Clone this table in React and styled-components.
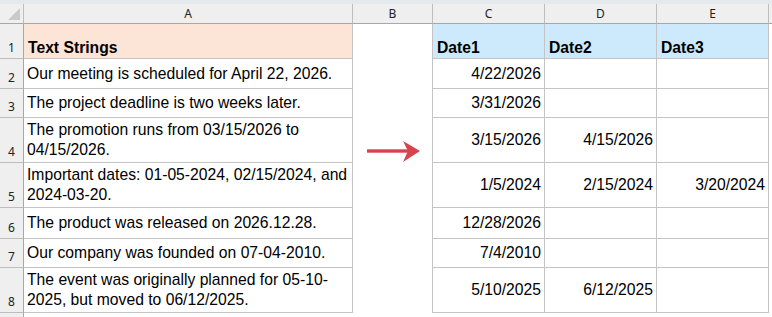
import React from "react";
import styled, { createGlobalStyle } from "styled-components";

const GlobalStyle = createGlobalStyle`
  html, body {
    margin: 0;
    padding: 0;
    background: #ffffff;
  }
`;

const Page = styled.div`
  width: 772px;
  height: 317px;
  overflow: hidden;
  background: #ffffff;
  font-family: "Liberation Sans", Arial, sans-serif;
`;

const TopStrip = styled.div`
  height: 4px;
  background: #e4e9ee;
`;

const Sheet = styled.div`
  position: relative;
  display: grid;
  grid-template-columns: 24px 329px 80px 112px 112px 112px 1fr;
  grid-template-rows: 20px 35px 30px 29px 45px 45px 31px 29px 45px 20px;
`;

const ColHead = styled.div`
  box-sizing: border-box;
  background: #efefef;
  border-right: 1px solid #bdbdbd;
  border-bottom: 1px solid #a8a8a8;
  display: flex;
  align-items: center;
  justify-content: center;
  font-family: "Noto Sans", "Open Sans", sans-serif;
  font-size: 12px;
  color: #222;
`;

const Corner = styled(ColHead)`
  position: relative;
  &::after {
    content: "";
    position: absolute;
    right: 3px;
    bottom: 3px;
    width: 0;
    height: 0;
    border-left: 12px solid transparent;
    border-bottom: 12px solid #c9c9c9;
  }
`;

const RowHead = styled.div`
  box-sizing: border-box;
  background: #efefef;
  border-right: 1px solid #a8a8a8;
  border-bottom: 1px solid #bdbdbd;
  display: flex;
  align-items: flex-end;
  justify-content: center;
  padding-bottom: 2px;
  font-family: "Noto Sans", "Open Sans", sans-serif;
  font-size: 12px;
  color: #222;
`;

const Cell = styled.div`
  box-sizing: border-box;
  background: ${(p) => p.$bg || "#ffffff"};
  border-right: ${(p) => (p.$noRight ? "none" : "1px solid #c4c4c4")};
  border-bottom: ${(p) => (p.$noBottom ? "none" : "1px solid #c4c4c4")};
  display: flex;
  flex-direction: column;
  justify-content: ${(p) => (p.$head ? "flex-end" : "center")};
  align-items: ${(p) => (p.$right ? "flex-end" : "flex-start")};
  padding: 0 3px 0 ${(p) => (p.$head ? "4px" : "3px")};
  font-size: 15.7px;
  line-height: 20px;
  font-weight: ${(p) => (p.$head ? 700 : 400)};
  color: #000;
  white-space: nowrap;
`;

const Arrow = styled.svg`
  position: absolute;
  left: 360px;
  top: 126px;
`;

const rows = [
  {
    n: 2,
    text: ["Our meeting is scheduled for April 22, 2026."],
    dates: ["4/22/2026", "", ""],
  },
  {
    n: 3,
    text: ["The project deadline is two weeks later."],
    dates: ["3/31/2026", "", ""],
  },
  {
    n: 4,
    text: ["The promotion runs from 03/15/2026 to", "04/15/2026."],
    dates: ["3/15/2026", "4/15/2026", ""],
  },
  {
    n: 5,
    text: ["Important dates: 01-05-2024, 02/15/2024, and", "2024-03-20."],
    dates: ["1/5/2024", "2/15/2024", "3/20/2024"],
  },
  {
    n: 6,
    text: ["The product was released on 2026.12.28."],
    dates: ["12/28/2026", "", ""],
  },
  {
    n: 7,
    text: ["Our company was founded on 07-04-2010."],
    dates: ["7/4/2010", "", ""],
  },
  {
    n: 8,
    text: ["The event was originally planned for 05-10-", "2025, but moved to 06/12/2025."],
    dates: ["5/10/2025", "6/12/2025", ""],
  },
];

const App = () => {
  return (
    <Page>
      <GlobalStyle />
      <TopStrip />
      <Sheet>
        <Corner />
        <ColHead>A</ColHead>
        <ColHead>B</ColHead>
        <ColHead>C</ColHead>
        <ColHead>D</ColHead>
        <ColHead>E</ColHead>
        <ColHead />

        <RowHead>1</RowHead>
        <Cell $head $bg="#fce4d6">Text Strings</Cell>
        <Cell $noBottom />
        <Cell $head $bg="#cdeafc">Date1</Cell>
        <Cell $head $bg="#cdeafc">Date2</Cell>
        <Cell $head $bg="#cdeafc">Date3</Cell>
        <Cell $noBottom $noRight />

        {rows.map((r) => (
          <React.Fragment key={r.n}>
            <RowHead>{r.n}</RowHead>
            <Cell>
              {r.text.map((line) => (
                <span key={line}>{line}</span>
              ))}
            </Cell>
            <Cell $noBottom />
            {r.dates.map((d, i) => (
              <Cell key={i} $right>
                {d}
              </Cell>
            ))}
            <Cell $noBottom $noRight />
          </React.Fragment>
        ))}

        <RowHead />

        <Arrow width="64" height="36" viewBox="0 0 64 36">
          <rect x="7" y="19.3" width="42" height="3.4" fill="#d9434f" />
          <path d="M60 21 L43 11 L48 21 L43 32 Z" fill="#d9434f" />
        </Arrow>
      </Sheet>
    </Page>
  );
};

export default App;
